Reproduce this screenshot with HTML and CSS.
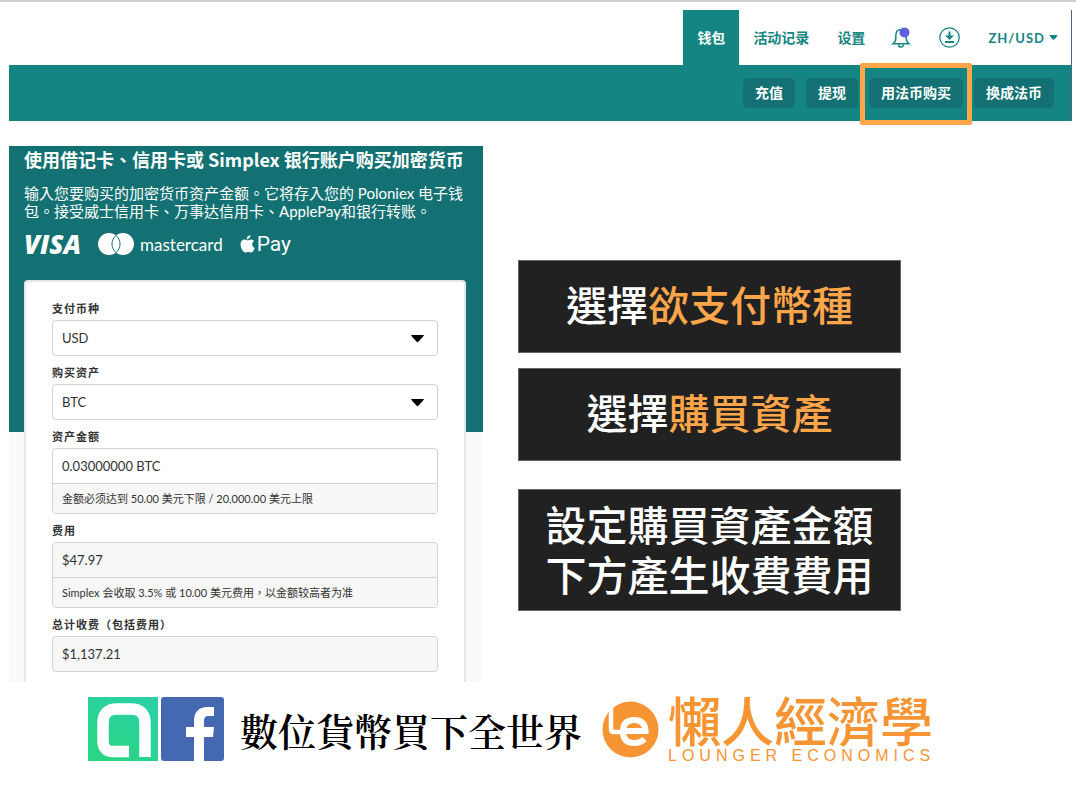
FILE: index.html
```html
<!DOCTYPE html>
<html lang="zh-Hant">
<head>
<meta charset="utf-8">
<meta name="viewport" content="width=device-width, initial-scale=1">
<title>懶人經濟學</title>
<link rel="stylesheet" href="styles.css">
</head>
<body>
<div class="page">
  <header class="site-header">
    <nav class="nav">
      <a class="nav-link nav-link-active" href="#">钱包</a>
      <a class="nav-link" href="#">活动记录</a>
      <a class="nav-link" href="#">设置</a>
      <div class="nav-tools">
        <button class="icon-button" type="button" aria-label="通知">
          <svg width="20" height="22" viewBox="0 0 20 22" fill="none" stroke="#158583" stroke-width="1.5">
            <path d="M2 16.800C3.900 15.500 4.800 13.800 4.800 11V8.500C4.800 5 6.800 2.600 10 2.600s5.200 2.400 5.200 5.900V11c0 2.800.900 4.500 2.800 5.800z"/>
            <path d="M7.600 17.500a2.400 2.600 0 0 0 4.800 0"/>
            <circle cx="13.500" cy="5.500" r="5" fill="#6160e0" stroke="none"/>
          </svg>
        </button>
        <button class="icon-button" type="button" aria-label="下载">
          <svg width="21" height="21" viewBox="0 0 21 21" fill="none" stroke="#158583">
            <circle cx="10.500" cy="10.500" r="9.700" stroke-width="1.300"/>
            <path d="M10.500 4.500v6M6 15h9" stroke-width="2"/>
            <path d="M6 8.500h9l-4.500 4.500z" fill="#158583" stroke="none"/>
          </svg>
        </button>
        <button class="locale" type="button">ZH/USD
          <svg width="9" height="5" viewBox="0 0 9 5"><path d="M.3 0h8.400Q7 3.500 4.500 5 2 3.500.3 0z" fill="#158583"/></svg>
        </button>
      </div>
    </nav>
    <div class="actions">
      <button class="action" type="button">充值</button>
      <button class="action" type="button">提现</button>
      <button class="action action-marked" type="button">用法币购买</button>
      <button class="action" type="button">换成法币</button>
    </div>
  </header>

  <main class="content">
    <section class="panel">
      <h1 class="panel-title">使用借记卡、信用卡或 Simplex 银行账户购买加密货币</h1>
      <p class="panel-text">输入您要购买的加密货币资产金额。它将存入您的 Poloniex 电子钱<br>包。接受威士信用卡、万事达信用卡、ApplePay和银行转账。</p>
      <div class="brands">
        <span class="visa">VISA</span>
        <span class="mastercard">
          <svg width="36" height="22" viewBox="0 0 36 22">
            <circle cx="11" cy="11" r="11" fill="#fff"/>
            <circle cx="25" cy="11" r="11" fill="#fff"/>
            <path d="M18 2.500a11 11 0 0 1 0 17a11 11 0 0 1 0-17z" fill="#fff" stroke="#137173" stroke-width="1"/>
          </svg>
          mastercard
        </span>
        <span class="applepay">
          <svg width="15" height="18" viewBox="0 0 15 18" fill="#fff">
            <path d="M10.300.2c.1 1.300-.4 2.400-1.100 3.100-.7.800-1.700 1.200-2.500 1.100-.1-1.200.4-2.300 1.100-3C8.500.7 9.500.2 10.300.2z"/>
            <path d="M14 6.100c-1.200.8-1.800 1.800-1.800 3.200 0 1.700 1 3 2.600 3.600-.4 1.300-1.100 2.500-1.900 3.500-1.500 1.900-2.700.7-4.200.6-1.700-.1-2.700 1.300-4.200.2C2.200 15.700.5 12.500.5 9.400c0-3 1.900-4.800 4-4.800 1.400 0 2.500.9 3.400.9s2.100-1 3.700-.9c1 .1 1.900.6 2.400 1.500z"/>
          </svg>
          Pay
        </span>
      </div>
      <form class="card">
        <label class="label" for="currency">支付币种</label>
        <div class="field">
          <select class="control" id="currency"><option>USD</option></select>
          <svg class="caret" width="13" height="8" viewBox="0 0 13 8"><path d="M0 0h13q-.5 1.500-6.500 7.500Q.5 1.500 0 0z"/></svg>
        </div>
        <label class="label" for="asset">购买资产</label>
        <div class="field">
          <select class="control" id="asset"><option>BTC</option></select>
          <svg class="caret" width="13" height="8" viewBox="0 0 13 8"><path d="M0 0h13q-.5 1.500-6.500 7.500Q.5 1.500 0 0z"/></svg>
        </div>
        <label class="label" for="amount">资产金额</label>
        <div class="field">
          <input class="control" id="amount" type="text" value="0.03000000 BTC">
          <p class="hint">金额必须达到 50.00 美元下限 / 20,000.00 美元上限</p>
        </div>
        <label class="label" for="fee">费用</label>
        <div class="field field-readonly">
          <input class="control" id="fee" type="text" value="$47.97" readonly>
          <p class="hint">Simplex 会收取 3.5% 或 10.00 美元费用，以金额较高者为准</p>
        </div>
        <label class="label" for="total">总计收费（包括费用）</label>
        <div class="field field-readonly">
          <input class="control" id="total" type="text" value="$1,137.21" readonly>
        </div>
      </form>
    </section>

    <aside class="notes">
      <p class="note">選擇<span class="accent">欲支付幣種</span></p>
      <p class="note">選擇<span class="accent">購買資產</span></p>
      <p class="note note-last">設定購買資產金額<br>下方產生收費費用</p>
    </aside>
  </main>

  <footer class="footer">
    <div class="social">
      <svg width="70" height="64" viewBox="0 0 70 64">
        <defs><linearGradient id="green" x1="0" y1="1" x2="0.600" y2="0"><stop offset="0" stop-color="#29d67d"/><stop offset="1" stop-color="#2bd0a5"/></linearGradient></defs>
        <rect width="70" height="64" fill="url(#green)"/>
        <path d="M41 54.500H25Q15 54.500 15 44V26Q15 12 29 12H43Q57 12 57 26V60" fill="none" stroke="#fff" stroke-width="11.500"/>
      </svg>
      <svg width="63" height="64" viewBox="0 0 63 64">
        <rect width="63" height="64" rx="3" fill="#4569b0"/>
        <path d="M33 64V40h-8V30h8v-6c0-9 5-14 13-14h7v9h-5c-4 0-5 2-5 5v6h10l-1 10h-9v24z" fill="#fff"/>
      </svg>
    </div>
    <p class="slogan">數位貨幣買下全世界</p>
    <div class="brand">
      <svg width="57" height="57" viewBox="0 0 57 57">
        <circle cx="28.500" cy="28.500" r="28" fill="#f79433"/>
        <path d="M9 6V28Q9 31 12 31H21" fill="none" stroke="#fff" stroke-width="4.500"/>
        <path d="M21 30H43.500Q43 19 32 19 21 19 21 30.500T32 42Q39 42 42.500 38" fill="none" stroke="#fff" stroke-width="6"/>
      </svg>
      <div class="brand-text">
        <span class="brand-name">懶人經濟學</span>
        <span class="brand-sub">LOUNGER ECONOMICS</span>
      </div>
    </div>
  </footer>
</div>
</body>
</html>
```

FILE: styles.css
```css
* {
  box-sizing: border-box;
}

body {
  margin: 0;
  background: #fff;
  color: #333;
  font-family: Lato, "Noto Sans CJK TC", sans-serif;
}

p,
h1 {
  margin: 0;
}

button {
  margin: 0;
  border: 0;
  background: none;
  font-family: inherit;
  cursor: pointer;
}

svg {
  display: block;
  flex: none;
}

.page {
  border-top: 2px solid #d0d0d0;
  padding: 8px 4px 0 9px;
}

.site-header {
  border-right: 1px solid #4f6690;
}

.nav {
  display: flex;
  justify-content: flex-end;
  height: 55px;
}

.nav-link {
  display: flex;
  align-items: center;
  padding: 0 14px 2px;
  color: #158583;
  font-size: 14px;
  font-weight: 700;
  text-decoration: none;
}

.nav-link-active {
  background: #158583;
  color: #fff;
}

.nav-tools {
  display: flex;
  align-items: center;
  gap: 28px;
  padding: 0 13px 0 12px;
}

.icon-button {
  padding: 0;
}

.locale {
  display: flex;
  align-items: center;
  gap: 4px;
  padding: 0;
  color: #158583;
  font-size: 13px;
  font-weight: 700;
  letter-spacing: 1px;
}

.actions {
  display: flex;
  align-items: center;
  justify-content: flex-end;
  gap: 11px;
  height: 56px;
  padding-right: 17px;
  background: #158583;
}

.action {
  height: 30px;
  padding: 0 12px 2px;
  border-radius: 5px;
  background: #137173;
  color: #fff;
  font-size: 14px;
  font-weight: 700;
}

.action-marked {
  position: relative;
}

.action-marked::after {
  content: "";
  position: absolute;
  inset: -15px -9px -17px;
  border: 5px solid #ffa64a;
  border-radius: 2px;
}

.content {
  display: grid;
  grid-template-columns: 474fr 554fr;
  gap: 35px;
  margin-top: 25px;
}

.panel {
  padding: 1px 17px 0 15px;
  background: linear-gradient(#137173 286px, #fafafa 286px);
  color: #fff;
}

.panel-title {
  font-family: "Noto Sans CJK TC", sans-serif;
  font-size: 18px;
  font-weight: 700;
  line-height: 24px;
  white-space: nowrap;
}

.panel-text {
  margin-top: 13px;
  font-size: 15px;
  font-weight: 400;
  line-height: 18px;
  white-space: nowrap;
}

.brands {
  display: flex;
  align-items: center;
  gap: 17px;
  height: 24px;
  margin-top: 12px;
}

.visa {
  font-family: "Open Sans", sans-serif;
  font-size: 26px;
  font-style: italic;
  font-weight: 800;
}

.mastercard,
.applepay {
  display: flex;
  align-items: center;
}

.mastercard {
  gap: 6px;
  font-size: 17px;
}

.applepay {
  gap: 2px;
  font-family: Roboto, sans-serif;
  font-size: 21px;
}

.card {
  margin-top: 24px;
  padding: 10px 26px;
  border: 2px solid #e6e6e6;
  border-width: 2px 2px 0;
  border-radius: 4px 4px 0 0;
  background: #fff;
  color: #333;
}

.label {
  display: block;
  padding: 9px 0 3px;
  font-size: 11px;
  font-weight: 700;
  letter-spacing: 1px;
  line-height: 16px;
}

.field {
  position: relative;
  overflow: hidden;
  border: 1px solid #d3d3d3;
  border-radius: 4px;
  background: #fff;
}

.field-readonly {
  background: #f7f7f7;
}

.control {
  display: block;
  width: 100%;
  height: 34px;
  margin: 0;
  padding: 0 9px;
  border: 0;
  appearance: none;
  background: none;
  color: #333;
  font-family: inherit;
  font-size: 13px;
}

.caret {
  position: absolute;
  top: 14px;
  right: 13px;
  pointer-events: none;
}

.hint {
  padding: 0 9px;
  border-top: 1px solid #d3d3d3;
  background: #f7f7f7;
  font-size: 11px;
  line-height: 29px;
}

.notes {
  display: flex;
  flex-direction: column;
  gap: 15px;
  padding: 114px 171px 0 0;
}

.note {
  padding: 17px 0 24px;
  border: 1px solid #666;
  background: #212121;
  color: #fff;
  font-family: "Noto Sans CJK TC", sans-serif;
  font-size: 41px;
  font-weight: 500;
  line-height: 50px;
  text-align: center;
  white-space: nowrap;
}

.note-last {
  margin-top: 13px;
  padding: 8px 0 12px;
}

.accent {
  color: #ffa64a;
}

.footer {
  display: flex;
  align-items: center;
  gap: 16px;
  margin-top: 12px;
  padding-left: 79px;
}

.social {
  display: flex;
  gap: 3px;
}

.slogan {
  color: #000;
  font-family: "Noto Serif CJK TC", "Liberation Serif", serif;
  font-size: 38px;
  font-weight: 600;
  white-space: nowrap;
}

.brand {
  display: flex;
  align-items: center;
  gap: 9px;
  padding-left: 4px;
}

.brand-text {
  display: flex;
  flex-direction: column;
  color: #f79433;
  white-space: nowrap;
}

.brand-name {
  font-family: "Noto Sans CJK TC", sans-serif;
  font-size: 53px;
  font-weight: 500;
  line-height: 50px;
}

.brand-sub {
  margin-top: 4px;
  font-family: "Liberation Sans", sans-serif;
  font-size: 16px;
  letter-spacing: 5px;
  line-height: 16px;
}
```
